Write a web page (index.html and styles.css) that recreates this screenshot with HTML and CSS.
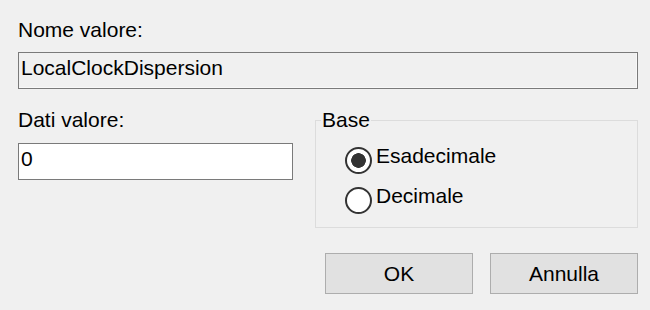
FILE: index.html
```html
<!DOCTYPE html>
<html lang="it">

<head>
    <meta charset="UTF-8">
    <title>Modifica valore DWORD</title>
    <link rel="stylesheet" href="styles.css">
</head>

<body>
    <div class="dialog">
        <div class="label">Nome valore:</div>
        <div class="field field-disabled">LocalClockDispersion</div>

        <div class="row">
            <div class="data-col">
                <div class="label">Dati valore:</div>
                <div class="field field-data">0</div>
            </div>

            <fieldset class="group">
                <legend>Base</legend>
                <label class="option">
                    <input type="radio" name="base" checked>
                    <span>Esadecimale</span>
                </label>
                <label class="option">
                    <input type="radio" name="base">
                    <span>Decimale</span>
                </label>
            </fieldset>
        </div>

        <div class="buttons">
            <button type="button">OK</button>
            <button type="button">Annulla</button>
        </div>
    </div>
</body>

</html>
```

FILE: styles.css
```css
body {
    margin: 0;
    background-color: #f0f0f0;
    font-family: 'Liberation Sans', Arial, sans-serif;
    font-size: 21px;
    line-height: 24px;
    color: #000;
}

.dialog {
    width: 620px;
    padding: 18px 12px 0 18px;
}

.label {
    height: 24px;
    margin-bottom: 10px;
}

.field {
    box-sizing: border-box;
    height: 37px;
    padding: 3px 2px 0;
    border: 1px solid #7a7a7a;
    white-space: nowrap;
}

.field-disabled {
    background-color: #f0f0f0;
    box-shadow: inset -1px -1px 0 #f8f8f8;
}

.field-data {
    width: 275px;
    margin-top: 11px;
    background-color: #fff;
}

.row {
    display: flex;
    gap: 22px;
    margin-top: 19px;
}

.data-col .label {
    margin-bottom: 0;
}

.group {
    box-sizing: border-box;
    width: 324px;
    height: 120px;
    margin: 0;
    padding: 12px 0 3px 29px;
    border: 1px solid #dcdcdc;
}

.group legend {
    margin-left: -24px;
    padding: 0 1px;
}

.option {
    display: flex;
    height: 40px;
}

.option input {
    appearance: none;
    box-sizing: border-box;
    width: 27px;
    height: 27px;
    margin: 3px 4px 0 0;
    border: 2px solid #333;
    border-radius: 50%;
    background: #fff;
}

.option input:checked {
    background: radial-gradient(circle, #333 7px, #fff 7.6px);
}

.buttons {
    display: flex;
    justify-content: flex-end;
    gap: 17px;
    margin-top: 25px;
}

.buttons button {
    width: 148px;
    height: 41px;
    padding: 0;
    border: 1px solid #adadad;
    background-color: #e1e1e1;
    font-family: inherit;
    font-size: 21px;
    color: #000;
}
```
